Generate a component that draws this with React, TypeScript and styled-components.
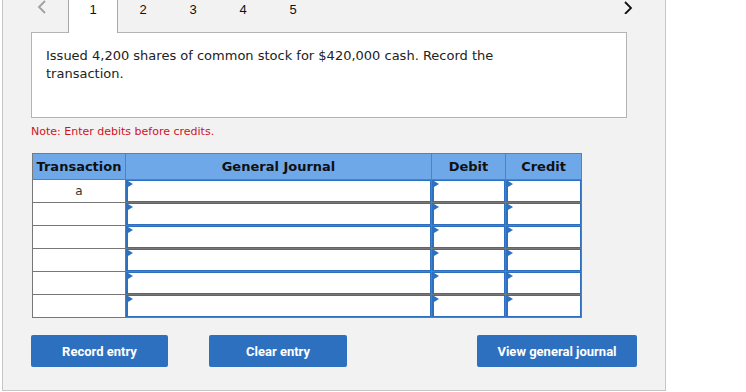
import React from "react";
import styled, { createGlobalStyle } from "styled-components";

const Global = createGlobalStyle`
  html, body { margin: 0; padding: 0; background: #ffffff; }
  body { font-family: "DejaVu Sans", Verdana, sans-serif; }
  * { box-sizing: border-box; }
`;

const Panel = styled.div`
  margin-left: 2px;
  width: 664px;
  height: 391px;
  background: #f2f2f2;
  border: 1px solid #c6c6c6;
  border-top: none;
  display: flex;
  flex-direction: column;
`;

const TabBar = styled.div`
  height: 32px;
  display: flex;
  align-items: stretch;
  position: relative;
  z-index: 1;
`;

const Arrow = styled.div<{ $left?: boolean }>`
  width: 12px;
  display: flex;
  justify-content: center;
  padding-top: 0;
  margin-left: ${(p) => (p.$left ? "33px" : "auto")};
  margin-right: ${(p) => (p.$left ? "20px" : "31px")};
`;

const Tab = styled.div<{ $active?: boolean }>`
  width: 50px;
  height: ${(p) => (p.$active ? "33px" : "32px")};
  display: flex;
  justify-content: center;
  padding-top: 2px;
  font-family: "Liberation Sans", Arial, sans-serif;
  font-size: 13px;
  line-height: 16px;
  color: #111;
  background: ${(p) => (p.$active ? "#ffffff" : "transparent")};
  border-left: 1px solid ${(p) => (p.$active ? "#a8a8a8" : "transparent")};
  border-right: 1px solid ${(p) => (p.$active ? "#a8a8a8" : "transparent")};
`;

const Body = styled.div`
  padding-left: 28px;
  display: flex;
  flex-direction: column;
`;

const Question = styled.div`
  width: 596px;
  height: 86px;
  background: #ffffff;
  border: 1px solid #b4b4b4;
  padding: 14px 14px 0 14px;
  font-size: 13px;
  line-height: 18px;
  color: #222;
`;

const QText = styled.p`
  margin: 0;
  width: 470px;
`;

const Note = styled.div`
  margin-top: 7px;
  font-size: 11px;
  line-height: 14px;
  color: #d0121b;
`;

const Table = styled.table`
  margin-top: 14px;
  margin-left: 1px;
  border-collapse: collapse;
  table-layout: fixed;
  width: 549px;
`;

const Th = styled.th<{ $w: number }>`
  width: ${(p) => p.$w}px;
  height: 26px;
  background: #6fa8e8;
  border: 1px solid #7a7a7a;
  padding: 0;
  font-size: 13px;
  font-weight: bold;
  color: #111;
  text-align: center;
  white-space: nowrap;
  overflow: hidden;
`;

const Td = styled.td`
  height: 23px;
  border: 1px solid #777777;
  padding: 0;
  background: #ffffff;
  font-size: 12px;
  color: #333;
  text-align: center;
  vertical-align: middle;
`;

const InputTd = styled.td`
  height: 23px;
  border: 1px solid #777777;
  padding: 0;
  background: #ffffff;
`;

const Field = styled.div`
  position: relative;
  height: 22px;
  border: 1px solid #2e70c0;
  border-left-width: 2px;
  background: #ffffff;
`;

const Marker = styled.span`
  position: absolute;
  left: 0;
  top: 0;
  width: 0;
  height: 0;
  border-left: 5px solid #2e70c0;
  border-top: 3px solid transparent;
  border-bottom: 3px solid transparent;
`;

const Buttons = styled.div`
  margin-top: 17px;
  display: flex;
  align-items: center;
`;

const Button = styled.button<{ $w: number; $ml: number }>`
  width: ${(p) => p.$w}px;
  height: 32px;
  margin-left: ${(p) => p.$ml}px;
  background: #2e70c0;
  border: none;
  border-radius: 2px;
  color: #ffffff;
  font-family: Roboto, "Liberation Sans", Arial, sans-serif;
  font-size: 13px;
  font-weight: 700;
  padding: 0;
`;

const Chevron = ({ left }: { left?: boolean }) => (
  <svg width="10" height="14" viewBox="0 0 10 14">
    <polyline
      points={left ? "8,1 2,7 8,13" : "2,2 8,8 2,14"}
      fill="none"
      stroke={left ? "#a0a0a0" : "#111111"}
      strokeWidth="1.8"
    />
  </svg>
);

const rows = ["a", "", "", "", "", ""];

export default function App() {
  return (
    <>
      <Global />
      <Panel>
        <TabBar>
          <Arrow $left>
            <Chevron left />
          </Arrow>
          <Tab $active>1</Tab>
          <Tab>2</Tab>
          <Tab>3</Tab>
          <Tab>4</Tab>
          <Tab>5</Tab>
          <Arrow>
            <Chevron />
          </Arrow>
        </TabBar>
        <Body>
          <Question>
            <QText>
              Issued 4,200 shares of common stock for $420,000 cash. Record the
              transaction.
            </QText>
          </Question>
          <Note>Note: Enter debits before credits.</Note>
          <Table>
            <thead>
              <tr>
                <Th $w={93}>Transaction</Th>
                <Th $w={306}>General Journal</Th>
                <Th $w={74}>Debit</Th>
                <Th $w={76}>Credit</Th>
              </tr>
            </thead>
            <tbody>
              {rows.map((r, i) => (
                <tr key={i}>
                  <Td>{r}</Td>
                  {[0, 1, 2].map((c) => (
                    <InputTd key={c}>
                      <Field>
                        <Marker />
                      </Field>
                    </InputTd>
                  ))}
                </tr>
              ))}
            </tbody>
          </Table>
          <Buttons>
            <Button $w={137} $ml={0}>Record entry</Button>
            <Button $w={138} $ml={41}>Clear entry</Button>
            <Button $w={160} $ml={130}>View general journal</Button>
          </Buttons>
        </Body>
      </Panel>
    </>
  );
}
